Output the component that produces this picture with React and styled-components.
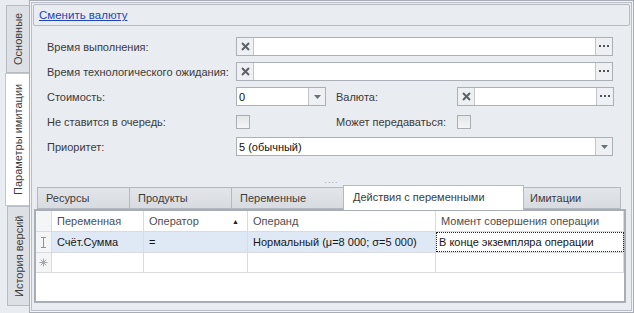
import React from 'react'
import styled, { createGlobalStyle } from 'styled-components'

const GlobalStyle = createGlobalStyle`
  html, body { margin: 0; padding: 0; }
  body { background: #e9ecf0; }
`

const Page = styled.div`
  display: flex;
  width: 634px;
  height: 313px;
  overflow: hidden;
  background: #e9ecf0;
  font-family: "Liberation Sans", Arial, sans-serif;
  font-size: 11px;
  color: #3a3a3a;
`

const SideTabs = styled.div`
  width: 29px;
  flex-shrink: 0;
  display: flex;
  flex-direction: column;
  align-items: flex-end;
  padding-top: 5px;
  box-sizing: border-box;
`

const SideTab = styled.div`
  writing-mode: vertical-rl;
  transform: rotate(180deg);
  box-sizing: border-box;
  width: ${p => (p.$active ? 24 : p.$w || 23)}px;
  height: ${p => p.$h}px;
  display: flex;
  align-items: center;
  justify-content: center;
  font-size: 11px;
  color: #3c3c3c;
  background: ${p => (p.$active ? '#ffffff' : '#dde0e5')};
  border: 1px solid ${p => (p.$active ? '#c4c8ce' : '#b7bcc4')};
  border-left: none;
`

const Frame = styled.div`
  flex: 1;
  display: flex;
  flex-direction: column;
  box-sizing: border-box;
  border: 1px solid #a8adb5;
  box-shadow: inset 0 0 0 1px #f4f5f7, inset 0 0 0 2px #b9bec6;
  padding: 3px 3px 0 3px;
`

const HeaderBox = styled.div`
  height: 22px;
  box-sizing: border-box;
  border: 1px solid #b6bbc3;
  border-radius: 2px;
  display: flex;
  align-items: center;
  padding-left: 5px;
`

const Link = styled.a`
  color: #1f43b8;
  text-decoration: underline;
  cursor: pointer;
  font-size: 11.5px;
`

const Form = styled.div`
  display: grid;
  grid-template-columns: 189px 100px 121px 157px;
  grid-auto-rows: 19px;
  row-gap: 6px;
  align-items: center;
  padding: 11px 0 0 14px;
`

const Label = styled.div`
  white-space: nowrap;
  color: #3a3a3a;
`

const Field = styled.div`
  grid-column: ${p => p.$span || 'auto'};
  width: ${p => p.$w}px;
  height: 19px;
  box-sizing: border-box;
  border: 1px solid #abb0b8;
  background: #fff;
  display: flex;
  align-items: stretch;
`

const Value = styled.div`
  flex: 1;
  display: flex;
  align-items: center;
  padding-left: 2px;
  color: #111;
  white-space: nowrap;
`

const SideButton = styled.div`
  width: 16px;
  flex-shrink: 0;
  display: flex;
  align-items: center;
  justify-content: center;
  background: #eef0f3;
  ${p => (p.$left ? 'border-right: 1px solid #c2c6cc;' : 'border-left: 1px solid #c2c6cc;')}
  color: #555;
`

const Checkbox = styled.div`
  width: 14px;
  height: 14px;
  box-sizing: border-box;
  border: 1px solid #a9aeb5;
  background: linear-gradient(#e4e6e9, #f4f5f6);
`

const Splitter = styled.div`
  height: 27px;
  display: flex;
  align-items: flex-end;
  justify-content: center;
  box-sizing: border-box;
  color: #9aa0a8;
  font-size: 9px;
  letter-spacing: 1px;
  line-height: 6px;
`

const Bottom = styled.div`
  display: flex;
  flex-direction: column;
  margin: 1px 4px 0 1px;
`

const TabStrip = styled.div`
  display: flex;
  align-items: flex-end;
  height: 25px;
  padding-left: 3px;
`

const Tab = styled.div`
  width: ${p => p.$w}px;
  height: ${p => (p.$active ? 25 : 22)}px;
  box-sizing: border-box;
  display: flex;
  align-items: center;
  padding-left: ${p => p.$pad ?? 8}px;
  padding-bottom: ${p => (p.$active ? 2 : 0)}px;
  background: ${p => (p.$active ? '#ffffff' : 'linear-gradient(#e2e5e9, #d8dce1)')};
  border: 1px solid #b4b9c1;
  border-bottom: ${p => (p.$active ? 'none' : '1px solid #b4b9c1')};
  margin-right: -1px;
  position: relative;
  z-index: ${p => (p.$active ? 2 : 1)};
  color: #3c3c3c;
  white-space: nowrap;
  margin-bottom: ${p => (p.$active ? -1 : 0)}px;
`

const Grid = styled.div`
  height: 94px;
  box-sizing: border-box;
  border: 2px solid #a9aeb6;
  background: #fff;
  display: flex;
  flex-direction: column;
`

const GridRow = styled.div`
  display: flex;
  height: ${p => p.$h || 21}px;
  box-sizing: border-box;
  border-bottom: 1px solid #d9dbde;
  background: ${p => p.$bg || '#fff'};
`

const Indicator = styled.div`
  width: 16px;
  flex-shrink: 0;
  box-sizing: border-box;
  border-right: 1px solid #d9dbde;
  background: #f4f5f7;
  display: flex;
  align-items: center;
  justify-content: center;
`

const Cell = styled.div`
  width: ${p => p.$w}px;
  flex-shrink: 0;
  box-sizing: border-box;
  border-right: 1px solid #d9dbde;
  display: flex;
  align-items: center;
  padding-left: 5px;
  color: ${p => (p.$head ? '#4e4e4e' : '#161616')};
  white-space: nowrap;
  overflow: hidden;
  ${p => p.$focus && 'background:#fff; outline: 1px dotted #222; outline-offset: -1px; padding-left: 3px;'}
`

const SortArrow = styled.span`
  margin-left: auto;
  margin-right: 8px;
  font-size: 7px;
  color: #222;
`

const ClearIcon = () => (
  <svg width="9" height="9" viewBox="0 0 9 9">
    <path d="M1 1 L8 8 M8 1 L1 8" stroke="#5c6168" strokeWidth="2" />
  </svg>
)

const DotsIcon = () => (
  <svg width="10" height="3" viewBox="0 0 10 3">
    <rect x="0" y="0" width="2" height="2" fill="#4f545b" />
    <rect x="4" y="0" width="2" height="2" fill="#4f545b" />
    <rect x="8" y="0" width="2" height="2" fill="#4f545b" />
  </svg>
)

const DownIcon = () => (
  <svg width="7" height="4" viewBox="0 0 7 4">
    <path d="M0 0 L7 0 L3.5 4 Z" fill="#6b7077" />
  </svg>
)

const CursorIcon = () => (
  <svg width="7" height="11" viewBox="0 0 7 11">
    <path d="M1 0.5 H6 M1 10.5 H6 M3.5 0.5 V10.5" stroke="#8d9299" strokeWidth="1" />
  </svg>
)

const StarIcon = () => (
  <svg width="9" height="9" viewBox="0 0 9 9">
    <path d="M4.5 0.5 V8.5 M0.5 4.5 H8.5 M1.7 1.7 L7.3 7.3 M7.3 1.7 L1.7 7.3" stroke="#a2a7ad" strokeWidth="1" />
  </svg>
)

const LookupField = ({ w, span }) => (
  <Field $w={w} $span={span}>
    <SideButton $left><ClearIcon /></SideButton>
    <Value />
    <SideButton><DotsIcon /></SideButton>
  </Field>
)

const ComboField = ({ w, span, value }) => (
  <Field $w={w} $span={span}>
    <Value>{value}</Value>
    <SideButton><DownIcon /></SideButton>
  </Field>
)

const columns = [
  { title: 'Переменная', w: 92 },
  { title: 'Оператор', w: 104, sort: true },
  { title: 'Операнд', w: 188 },
  { title: 'Момент совершения операции', w: 188 },
]

const tabs = [
  { title: 'Ресурсы', w: 93 },
  { title: 'Продукты', w: 103 },
  { title: 'Переменные', w: 113 },
  { title: 'Действия с переменными', w: 181, active: true, pad: 9 },
  { title: 'Имитации', w: 98, pad: 6 },
]

export default function App() {
  return (
    <>
      <GlobalStyle />
      <Page>
        <SideTabs>
          <SideTab $h={68}>Основные</SideTab>
          <SideTab $h={133} $active>Параметры имитации</SideTab>
          <SideTab $h={100} $w={22}>История версий</SideTab>
        </SideTabs>
        <Frame>
          <HeaderBox>
            <Link>Сменить валюту</Link>
          </HeaderBox>
          <Form>
            <Label>Время выполнения:</Label>
            <LookupField w={377} span="2 / 5" />

            <Label>Время технологического ожидания:</Label>
            <LookupField w={377} span="2 / 5" />

            <Label>Стоимость:</Label>
            <ComboField w={90} value="0" />
            <Label>Валюта:</Label>
            <LookupField w={157} />

            <Label>Не ставится в очередь:</Label>
            <Checkbox />
            <Label>Может передаваться:</Label>
            <Checkbox />

            <Label>Приоритет:</Label>
            <ComboField w={377} span="2 / 5" value="5 (обычный)" />
          </Form>
          <Splitter>....</Splitter>
          <Bottom>
            <TabStrip>
              {tabs.map(t => (
                <Tab key={t.title} $w={t.w} $active={t.active} $pad={t.pad}>{t.title}</Tab>
              ))}
            </TabStrip>
            <Grid>
              <GridRow $h={21}>
                <Indicator />
                {columns.map(c => (
                  <Cell key={c.title} $w={c.w} $head>
                    {c.title}
                    {c.sort && <SortArrow>▲</SortArrow>}
                  </Cell>
                ))}
              </GridRow>
              <GridRow $h={21} $bg="#dfe9f5">
                <Indicator><CursorIcon /></Indicator>
                <Cell $w={92}>Счёт.Сумма</Cell>
                <Cell $w={104}>=</Cell>
                <Cell $w={188}>Нормальный (μ=8 000; σ=5 000)</Cell>
                <Cell $w={188} $focus>В конце экземпляра операции</Cell>
              </GridRow>
              <GridRow $h={20}>
                <Indicator><StarIcon /></Indicator>
                <Cell $w={92} />
                <Cell $w={104} />
                <Cell $w={188} />
                <Cell $w={188} />
              </GridRow>
            </Grid>
          </Bottom>
        </Frame>
      </Page>
    </>
  )
}
